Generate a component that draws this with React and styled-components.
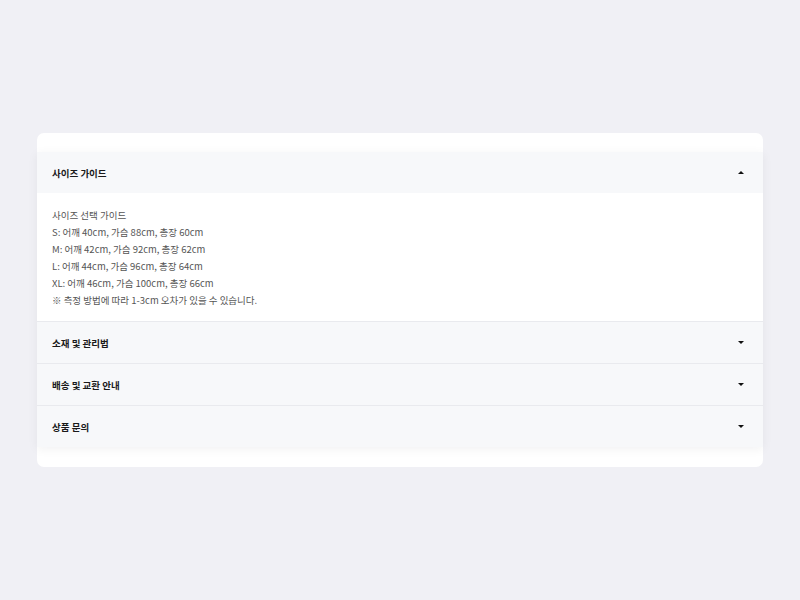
import React, { useState } from 'react';
import { styled, createGlobalStyle } from 'styled-components';

const GlobalStyle = createGlobalStyle`
  * { box-sizing: border-box; }
  body {
    margin: 0;
    background: #f0f0f5;
    font-family: "Noto Sans CJK KR", "Noto Sans", sans-serif;
  }
`;

const sections = [
  {
    title: '사이즈 가이드',
    lines: [
      '사이즈 선택 가이드',
      'S: 어깨 40cm, 가슴 88cm, 총장 60cm',
      'M: 어깨 42cm, 가슴 92cm, 총장 62cm',
      'L: 어깨 44cm, 가슴 96cm, 총장 64cm',
      'XL: 어깨 46cm, 가슴 100cm, 총장 66cm',
      '※ 측정 방법에 따라 1-3cm 오차가 있을 수 있습니다.',
    ],
  },
  { title: '소재 및 관리법', lines: [] },
  { title: '배송 및 교환 안내', lines: [] },
  { title: '상품 문의', lines: [] },
];

const App = () => {
  const [open, setOpen] = useState(0);

  return (
    <>
      <GlobalStyle />
      <SPage>
        <SCard>
          <SAccordion>
            {sections.map((s, i) => (
              <SItem key={s.title} $first={i === 0}>
                <SHeader onClick={() => setOpen(open === i ? -1 : i)}>
                  <span>{s.title}</span>
                  <SArrow $open={open === i} />
                </SHeader>
                {open === i && (
                  <SBody>
                    {s.lines.map((line) => (
                      <p key={line}>{line}</p>
                    ))}
                  </SBody>
                )}
              </SItem>
            ))}
          </SAccordion>
        </SCard>
      </SPage>
    </>
  );
};

const SPage = styled.div`
  width: 800px;
  height: 600px;
  padding: 133px 37px 0;
`;

const SCard = styled.div`
  background: #ffffff;
  border-radius: 7px;
  padding: 19px 0 20px;
`;

const SAccordion = styled.div`
  box-shadow: 0 2px 10px rgba(20, 20, 40, 0.06);
`;

const SItem = styled.div`
  border-top: ${({ $first }) => ($first ? 'none' : '1px solid #e9eaee')};
`;

const SHeader = styled.div`
  display: flex;
  justify-content: space-between;
  align-items: center;
  height: 41px;
  padding: 0 17px 0 15px;
  background: #f7f8fa;
  color: #1a1a1a;
  font-size: 9.5px;
  font-weight: 600;
  cursor: pointer;
`;

const SArrow = styled.i`
  width: 0;
  height: 0;
  margin-right: 2px;
  border-left: 3px solid transparent;
  border-right: 3px solid transparent;
  ${({ $open }) =>
    $open ? 'border-bottom: 3px solid #111;' : 'border-top: 3px solid #111;'}
`;

const SBody = styled.div`
  background: #ffffff;
  padding: 14px 15px 12px;
  color: #555;
  font-size: 9.5px;
  line-height: 17px;

  p {
    margin: 0;
  }
`;

export default App;
